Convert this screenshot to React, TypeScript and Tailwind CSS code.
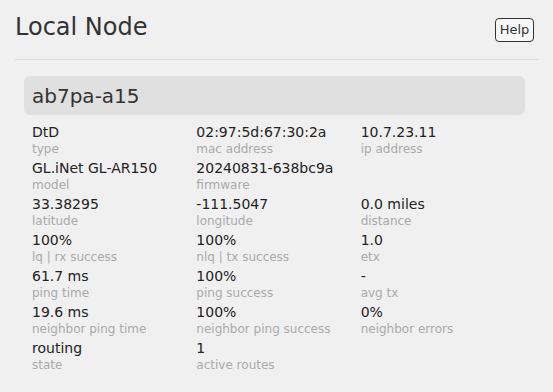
const rows: [string, string][][] = [
  [["DtD", "type"], ["02:97:5d:67:30:2a", "mac address"], ["10.7.23.11", "ip address"]],
  [["GL.iNet GL-AR150", "model"], ["20240831-638bc9a", "firmware"], ["", ""]],
  [["33.38295", "latitude"], ["-111.5047", "longitude"], ["0.0 miles", "distance"]],
  [["100%", "lq | rx success"], ["100%", "nlq | tx success"], ["1.0", "etx"]],
  [["61.7 ms", "ping time"], ["100%", "ping success"], ["-", "avg tx"]],
  [["19.6 ms", "neighbor ping time"], ["100%", "neighbor ping success"], ["0%", "neighbor errors"]],
  [["routing", "state"], ["1", "active routes"], ["", ""]],
];

function Field({ value, label }: { value: string; label: string }) {
  return (
    <div className="flex h-[36px] flex-col">
      <div className="h-[18px] text-[14px] leading-[18px] text-[#222]">{value}</div>
      <div className="h-[16px] text-[12px] leading-[16px] text-[#aaa]">{label}</div>
    </div>
  );
}

export default function App() {
  return (
    <div className="min-h-[392px] w-[553px] bg-[#f0f0f0] px-[15px] pt-[12px] font-['DejaVu_Sans',sans-serif]">
      <div className="flex items-start justify-between border-b border-[#dcdcdc] pb-[17px]">
        <h1 className="text-[24px] leading-[30px] text-[#333]">Local Node</h1>
        <button className="mr-[4px] mt-[6px] h-[24px] w-[39px] rounded-[4px] border border-[#333] bg-[#f7f7f7] text-[13px] leading-[22px] text-[#333]">
          Help
        </button>
      </div>
      <div className="ml-[9px] mr-[13px] mt-[16px]">
        <div className="flex h-[39px] items-center rounded-[6px] bg-[#e0e0e0] px-[8px] text-[20px] text-[#333]">
          ab7pa-a15
        </div>
        <div className="mt-[8px] grid grid-cols-3 pl-[8px]">
          {rows.flat().map(([v, l], i) => (
            <Field key={i} value={v} label={l} />
          ))}
        </div>
      </div>
    </div>
  );
}
